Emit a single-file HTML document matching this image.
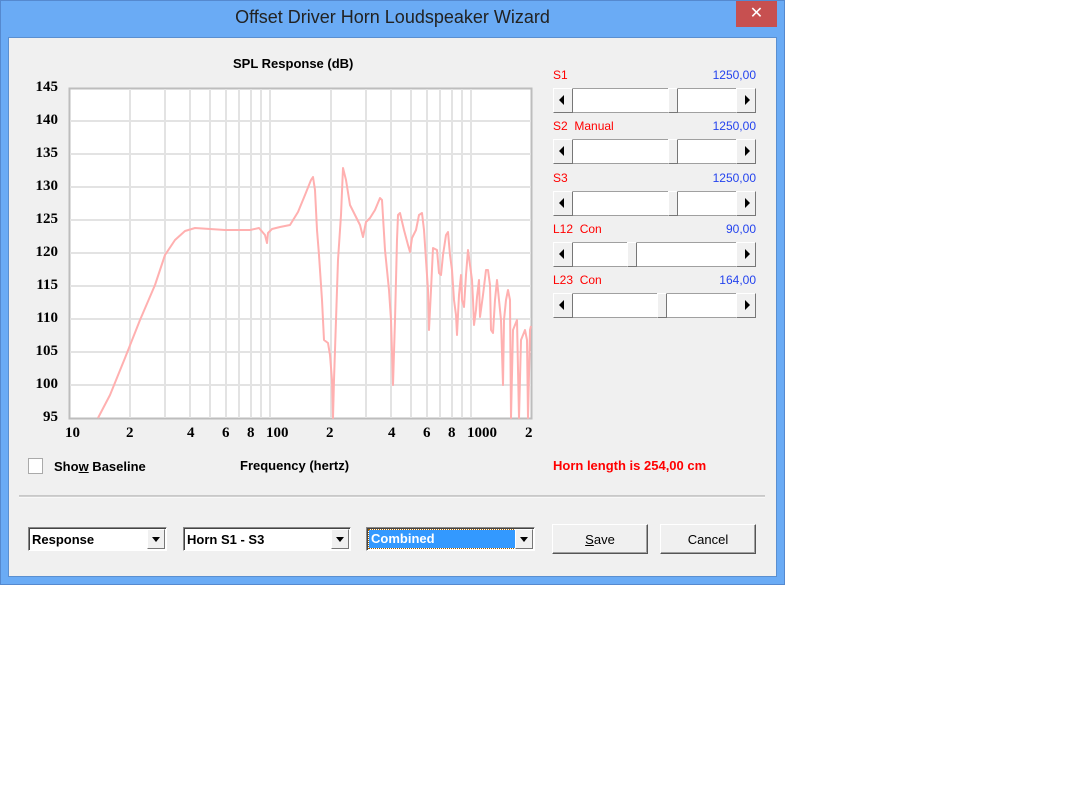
<!DOCTYPE html>
<html><head><meta charset="utf-8"><style>
*{margin:0;padding:0;box-sizing:border-box}
body{width:1080px;height:810px;background:#fff;position:relative;overflow:hidden;font-family:"Liberation Sans",sans-serif}
.a{position:absolute}
.win{left:0;top:0;width:785px;height:585px;background:#6aabf5;border:1px solid #5589cf}
.client{left:8px;top:37px;width:769px;height:540px;background:#f0f0f0;border:1px solid #5a8fd0}
.title{left:0;top:7px;width:785px;text-align:center;font-size:18px;color:#222}
.close{left:736px;top:1px;width:41px;height:26px;background:#c75050;color:#fff;font-size:16px;text-align:center;line-height:26px}
.b{font-weight:bold;font-size:13px;color:#000}
.yl{font-family:"Liberation Serif",serif;font-weight:bold;font-size:15px;width:40px;text-align:right;left:18px}
.xl{font-family:"Liberation Serif",serif;font-weight:bold;font-size:15px;top:425px}
.lab{font-size:12px;color:#f00}
.val{font-size:12px;color:#2443ee;text-align:right;width:100px;left:656px}
.sl{left:553px;width:203px;height:25px;background:#fff;border-top:1px solid #a0a0a0;border-bottom:1px solid #a0a0a0}
.btn{position:absolute;top:-1px;width:20px;height:25px;background:#f0f0f0;border:1px solid;border-color:#fff #777 #777 #fff}
.thumb{position:absolute;top:-1px;width:10px;height:25px;background:#f0f0f0;border:1px solid;border-color:#fff #777 #777 #fff}
.tl{position:absolute;left:5px;top:6px;width:0;height:0;border-top:5px solid transparent;border-bottom:5px solid transparent;border-right:5px solid #000}
.tr{position:absolute;left:8px;top:6px;width:0;height:0;border-top:5px solid transparent;border-bottom:5px solid transparent;border-left:5px solid #000}
.combo{top:527px;height:24px;background:#fff;border:1px solid;border-color:#888 #fff #fff #888;box-shadow:inset 1px 1px 0 #444;font-size:13px;font-weight:bold;padding:4px 0 0 3px}
.dd{position:absolute;right:1px;top:1px;width:18px;height:20px;background:#f0f0f0;border:1px solid;border-color:#fff #777 #777 #fff}
.dd:after{content:"";position:absolute;left:4px;top:7px;border-left:4px solid transparent;border-right:4px solid transparent;border-top:5px solid #000}
.pb{top:524px;height:30px;width:96px;background:#f0f0f0;border:1px solid;border-color:#fff #555 #555 #fff;box-shadow:inset -1px -1px 0 #a0a0a0;font-size:13px;text-align:center;line-height:29px}
</style></head><body>
<div class="a win"></div>
<div class="a title">Offset Driver Horn Loudspeaker Wizard</div>
<div class="a close">✕</div>
<div class="a client"></div>

<div class="a b" style="left:233px;top:56px">SPL Response (dB)</div>
<svg class="a" style="left:0;top:0" width="785" height="585">
<rect x="69.5" y="88.5" width="462" height="330" fill="#fff" stroke="#bdbdbd" stroke-width="2"/>
<g stroke="#e3e3e3" stroke-width="2">
<line x1="70" y1="121" x2="531" y2="121"/><line x1="70" y1="154" x2="531" y2="154"/><line x1="70" y1="187" x2="531" y2="187"/><line x1="70" y1="220" x2="531" y2="220"/><line x1="70" y1="253" x2="531" y2="253"/><line x1="70" y1="286" x2="531" y2="286"/><line x1="70" y1="319" x2="531" y2="319"/><line x1="70" y1="352" x2="531" y2="352"/><line x1="70" y1="385" x2="531" y2="385"/>
<line x1="130" y1="89" x2="130" y2="418"/><line x1="165" y1="89" x2="165" y2="418"/><line x1="190" y1="89" x2="190" y2="418"/><line x1="210" y1="89" x2="210" y2="418"/><line x1="226" y1="89" x2="226" y2="418"/><line x1="239" y1="89" x2="239" y2="418"/><line x1="251" y1="89" x2="251" y2="418"/><line x1="261" y1="89" x2="261" y2="418"/><line x1="270" y1="89" x2="270" y2="418"/>
<line x1="331" y1="89" x2="331" y2="418"/><line x1="366" y1="89" x2="366" y2="418"/><line x1="391" y1="89" x2="391" y2="418"/><line x1="411" y1="89" x2="411" y2="418"/><line x1="427" y1="89" x2="427" y2="418"/><line x1="440" y1="89" x2="440" y2="418"/><line x1="452" y1="89" x2="452" y2="418"/><line x1="462" y1="89" x2="462" y2="418"/><line x1="471" y1="89" x2="471" y2="418"/>
</g>
<polyline fill="none" stroke="#ffb0b0" stroke-width="2" stroke-linejoin="round" points="98,418 110,395 125,358 140,320 155,285 165,255 175,240 185,231 195,228 210,229 225,230 250,230 259,228 265,235 267,243 268,233 272,229 280,227 290,225 298,212 305,195 311,180 313,177 315,190 317,230 319,255 322,300 324,340 328,343 330,355 332,380 333,418 334,380 336,320 338,260 341,215 343,168 346,180 350,205 355,215 360,225 363,237 366,222 370,218 375,210 380,198 382,200 385,250 389,290 391,320 393,385 395,320 397,240 398,215 400,213 404,230 408,245 410,252 412,238 416,230 419,215 422,213 424,230 426,260 428,290 429,330 431,290 433,248 437,250 439,273 441,275 443,255 446,235 448,232 450,255 452,270 454,300 456,315 457,335 459,295 461,275 462,300 464,307 466,275 468,250 470,265 472,280 473,300 474,325 476,310 477,297 479,280 480,317 483,295 486,270 488,270 490,285 491,330 493,333 495,300 497,280 499,300 501,320 503,385 504,320 506,300 508,290 510,300 511,418 513,330 515,325 517,320 519,418 521,340 523,335 525,330 527,340 528,418 530,330 531,326"/>
<line x1="19" y1="496" x2="765" y2="496" stroke="#a0a0a0"/>
<line x1="19" y1="497" x2="765" y2="497" stroke="#fff"/>
</svg>
<div class="a yl" style="top:79px">145</div><div class="a yl" style="top:112px">140</div><div class="a yl" style="top:145px">135</div><div class="a yl" style="top:178px">130</div><div class="a yl" style="top:211px">125</div><div class="a yl" style="top:244px">120</div><div class="a yl" style="top:277px">115</div><div class="a yl" style="top:310px">110</div><div class="a yl" style="top:343px">105</div><div class="a yl" style="top:376px">100</div><div class="a yl" style="top:409px">95</div>
<div class="a xl" style="left:65px">10</div><div class="a xl" style="left:126px">2</div><div class="a xl" style="left:187px">4</div><div class="a xl" style="left:222px">6</div><div class="a xl" style="left:247px">8</div><div class="a xl" style="left:266px">100</div><div class="a xl" style="left:326px">2</div><div class="a xl" style="left:388px">4</div><div class="a xl" style="left:423px">6</div><div class="a xl" style="left:448px">8</div><div class="a xl" style="left:467px">1000</div><div class="a xl" style="left:525px">2</div>

<div class="a lab" style="left:553px;top:68px">S1</div><div class="a val" style="top:68px">1250,00</div>
<div class="a sl" style="top:88px"><div class="btn" style="left:0"><div class="tl"></div></div><div class="thumb" style="left:115px"></div><div class="btn" style="left:183px"><div class="tr"></div></div></div>
<div class="a lab" style="left:553px;top:119px">S2&nbsp; Manual</div><div class="a val" style="top:119px">1250,00</div>
<div class="a sl" style="top:139px"><div class="btn" style="left:0"><div class="tl"></div></div><div class="thumb" style="left:115px"></div><div class="btn" style="left:183px"><div class="tr"></div></div></div>
<div class="a lab" style="left:553px;top:171px">S3</div><div class="a val" style="top:171px">1250,00</div>
<div class="a sl" style="top:191px"><div class="btn" style="left:0"><div class="tl"></div></div><div class="thumb" style="left:115px"></div><div class="btn" style="left:183px"><div class="tr"></div></div></div>
<div class="a lab" style="left:553px;top:222px">L12&nbsp; Con</div><div class="a val" style="top:222px">90,00</div>
<div class="a sl" style="top:242px"><div class="btn" style="left:0"><div class="tl"></div></div><div class="thumb" style="left:74px"></div><div class="btn" style="left:183px"><div class="tr"></div></div></div>
<div class="a lab" style="left:553px;top:273px">L23&nbsp; Con</div><div class="a val" style="top:273px">164,00</div>
<div class="a sl" style="top:293px"><div class="btn" style="left:0"><div class="tl"></div></div><div class="thumb" style="left:104px"></div><div class="btn" style="left:183px"><div class="tr"></div></div></div>

<div class="a" style="left:28px;top:458px;width:15px;height:16px;background:#fff;border:1px solid #aaa"></div>
<div class="a b" style="left:54px;top:459px">Sho<u>w</u> Baseline</div>
<div class="a b" style="left:240px;top:458px">Frequency (hertz)</div>
<div class="a b" style="left:553px;top:458px;color:#f00">Horn length is 254,00 cm</div>

<div class="a combo" style="left:28px;width:139px">Response<div class="dd"></div></div>
<div class="a combo" style="left:183px;width:168px">Horn S1 - S3<div class="dd"></div></div>
<div class="a combo" style="left:366px;width:169px;padding:2px 0 0 2px"><div style="background:#3399ff;color:#fff;height:18px;width:146px;padding:1px 0 0 2px;outline:1px dotted #a06000">Combined</div><div class="dd"></div></div>
<div class="a pb" style="left:552px"><u>S</u>ave</div>
<div class="a pb" style="left:660px">Cancel</div>
</body></html>
